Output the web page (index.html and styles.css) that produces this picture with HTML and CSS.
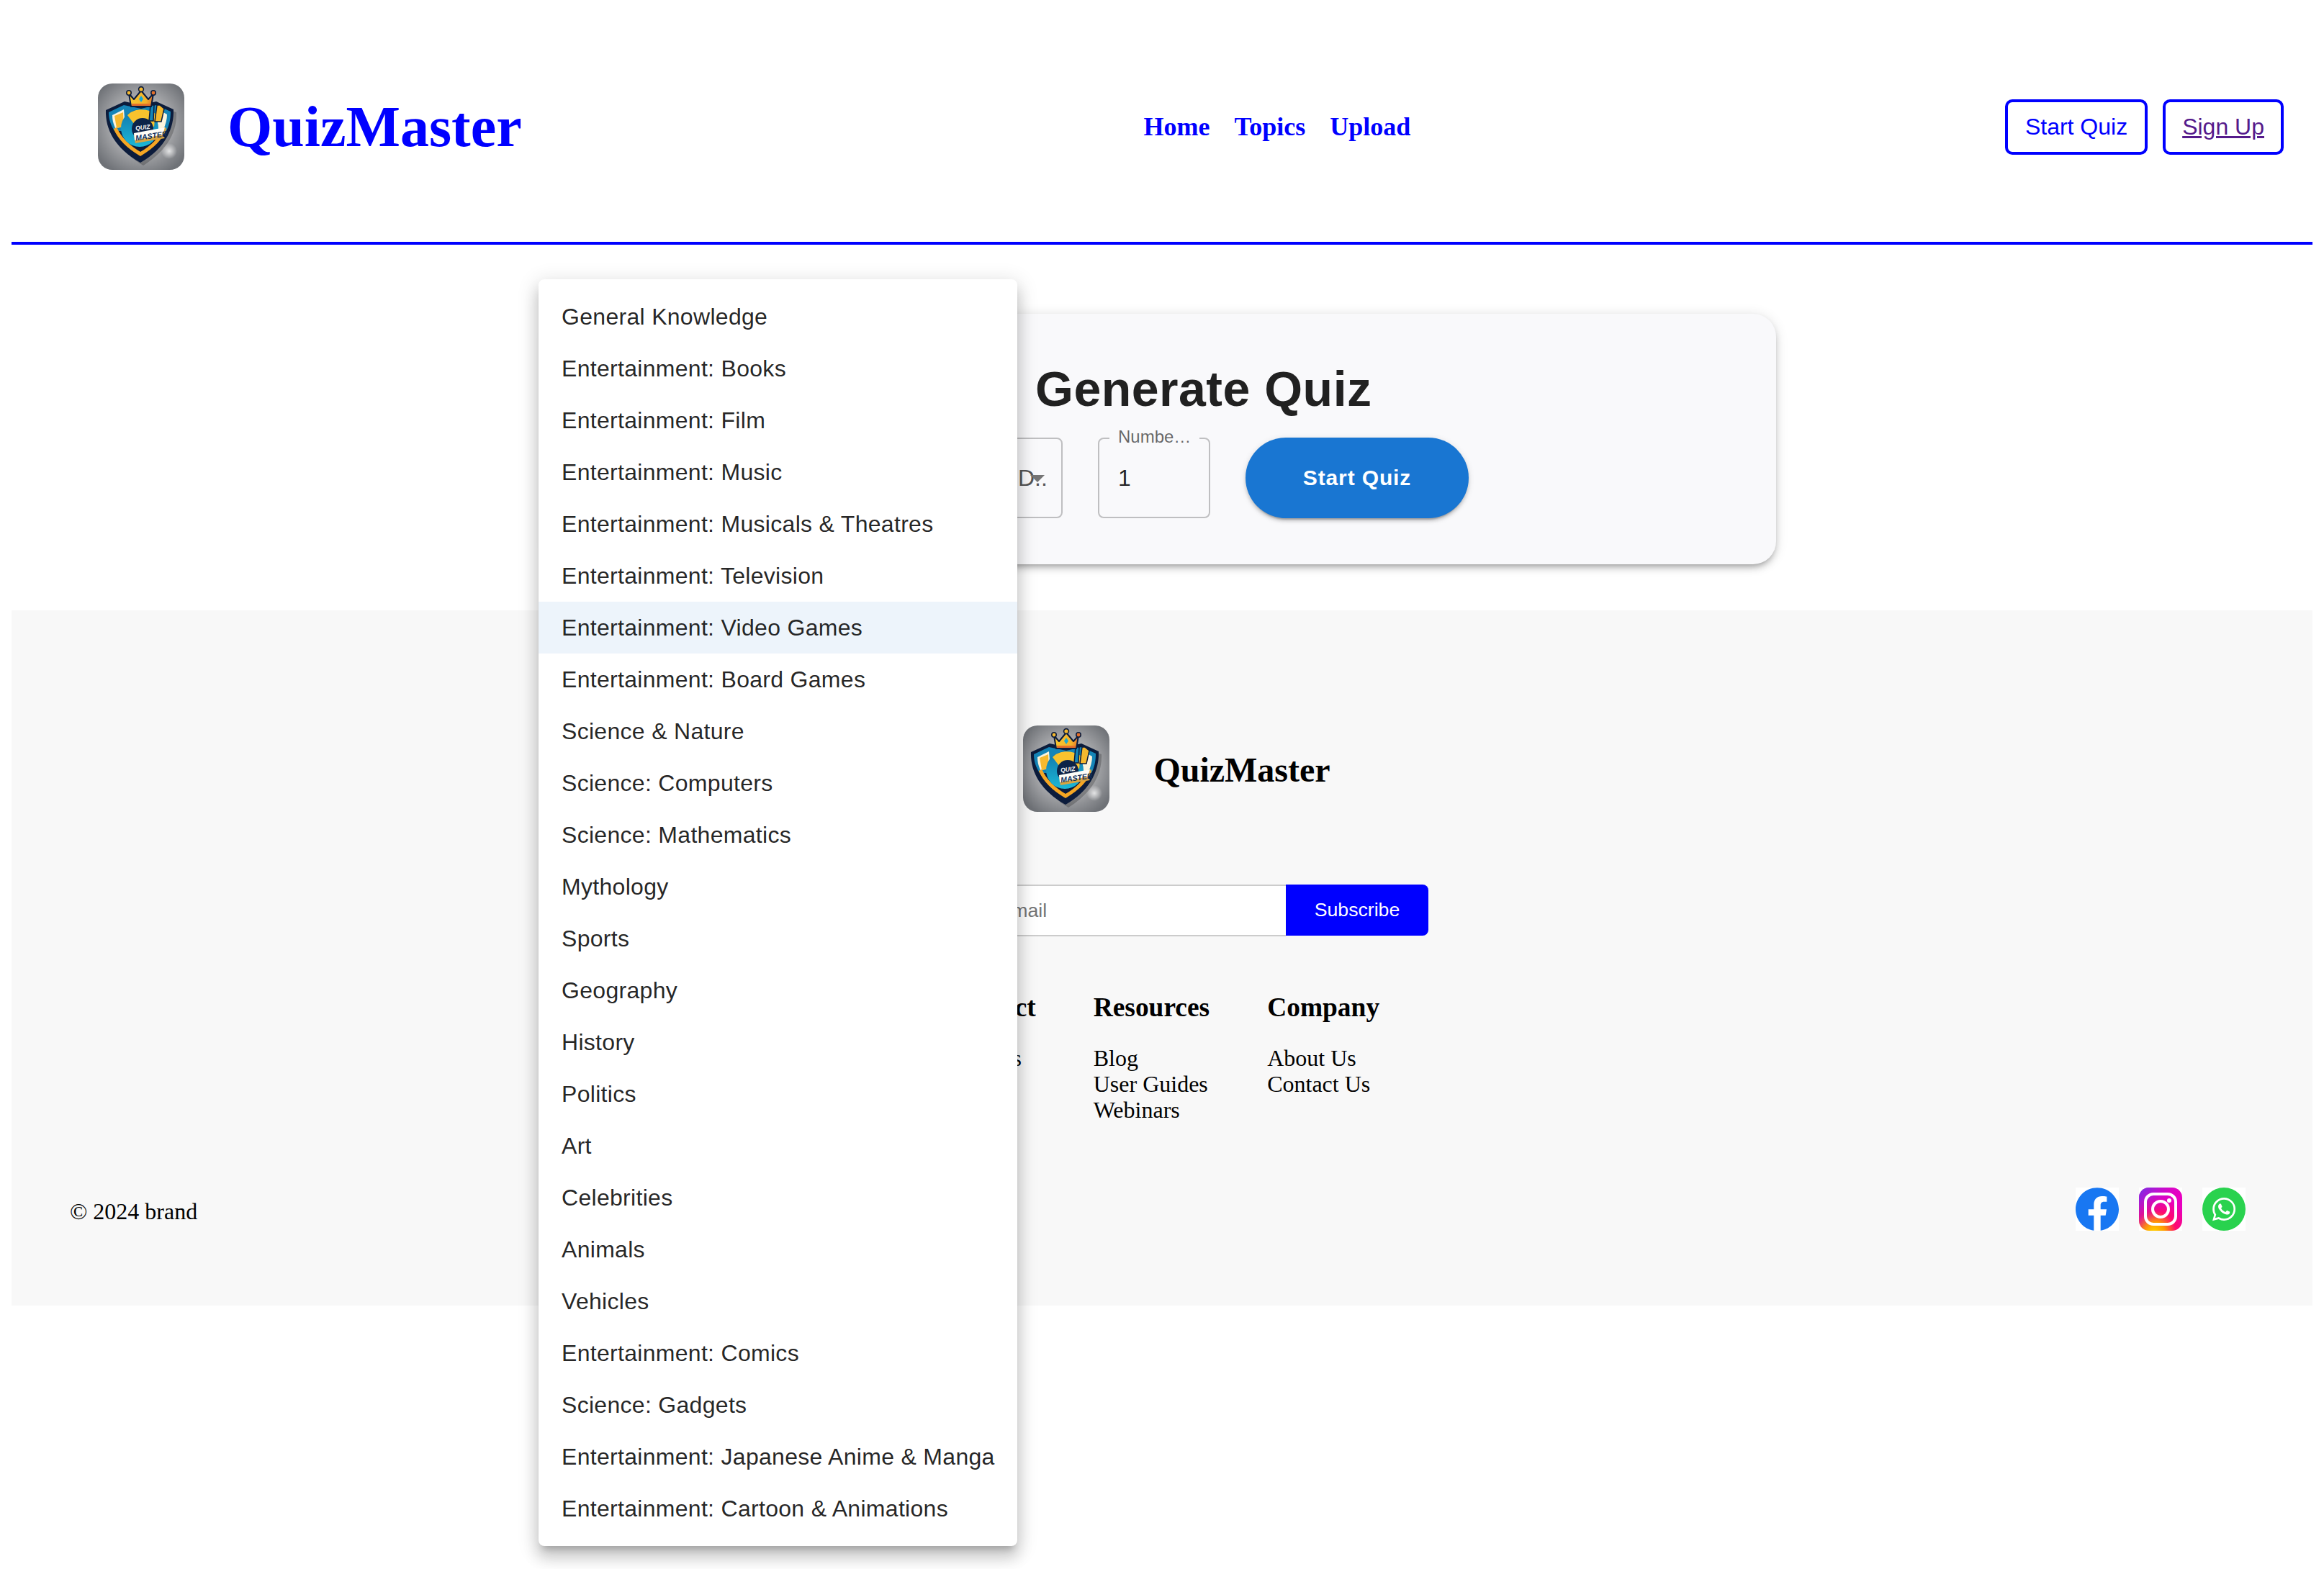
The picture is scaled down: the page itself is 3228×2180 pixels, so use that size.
FILE: index.html
```html
<!DOCTYPE html>
<html lang="en">
<head>
<meta charset="utf-8">
<title>QuizMaster</title>
<link rel="stylesheet" href="styles.css">
</head>
<body>
<svg class="defs" width="0" height="0" aria-hidden="true">
  <defs>
    <radialGradient id="lg-bg" cx="50%" cy="48%" r="62%">
      <stop offset="0" stop-color="#c8c9cb"/><stop offset=".55" stop-color="#a6a7aa"/><stop offset="1" stop-color="#6f7277"/>
    </radialGradient>
    <radialGradient id="lg-glare"><stop offset="0" stop-color="#fff" stop-opacity=".75"/><stop offset="1" stop-color="#fff" stop-opacity="0"/></radialGradient>
    <linearGradient id="lg-gold" x1="0" y1="0" x2="1" y2="0"><stop offset="0" stop-color="#f6c52f"/><stop offset=".7" stop-color="#f4b32a"/><stop offset="1" stop-color="#e5702a"/></linearGradient>
    <linearGradient id="lg-ring" x1="0" y1="0" x2="0" y2="1"><stop offset="0" stop-color="#0f75ab"/><stop offset="1" stop-color="#1cb8d6"/></linearGradient>
    <radialGradient id="ig-a" cx="35%" cy="105%" r="85%"><stop offset="0" stop-color="#ffd600"/><stop offset=".3" stop-color="#ff9a00"/><stop offset=".6" stop-color="#ff0a6c"/><stop offset="1" stop-color="#e800c0"/></radialGradient>
    <linearGradient id="ig-b" x1="0" y1="0" x2=".6" y2=".6"><stop offset="0" stop-color="#6a35e8"/><stop offset="1" stop-color="#e000c8" stop-opacity="0"/></linearGradient>
    <symbol id="logo" viewBox="0 0 120 120">
      <rect width="120" height="120" rx="20" fill="url(#lg-bg)"/>
      <circle cx="99" cy="94" r="11" fill="url(#lg-glare)"/>
      <path d="M14 40 41 28 60 33 79 28 106 37 C107 62 96 88 60 111 C26 90 12 66 14 40Z" fill="#000" opacity=".22" transform="translate(3 3)"/>
      <path d="M11 37 37 25 60 30 81 25 105 36 C106 62 94 90 59 110 C24 90 10 64 11 37Z" fill="#0c1c3c"/>
      <path d="M15 40 36 30 60 35 81 30 101 39 C101 50 99 58 95 66 L23 66 C18 58 15 50 15 40Z" fill="#1585b8"/>
      <path d="M20 44 36 36 38 60 24 62 C21 55 20 50 20 44Z" fill="#fbf4de"/>
      <path d="M23 45 35 40 36 60 26 62Z" fill="#f6b92e"/>
      <path d="M84 36 96 43 C96 50 94 57 91 64 L82 64Z" fill="#fbf4de"/>
      <path d="M24 62 C30 76 42 88 59 98 C76 88 88 76 93 62" fill="none" stroke="#f5a623" stroke-width="5"/>
      <circle cx="58" cy="62" r="26" fill="url(#lg-ring)"/>
      <path d="M41 44 C50 34 68 34 80 42 L78 60 L50 56Z" fill="#f8c22e"/>
      <path d="M82 30h4l6 5-4 18h-9Z" fill="#f6b92e" stroke="#0c1c3c" stroke-width="1.5"/>
      <path d="M73 30h5l-1 22h-6Z" fill="#1585b8" stroke="#0c1c3c" stroke-width="1.5"/>
      <circle cx="62" cy="63" r="15" fill="#0c2348"/>
      <path d="M50 71 95 61 90 72 93 76 52 83Z" fill="#d9a441"/>
      <path d="M50 69 93 61 90 71 51 79Z" fill="#fdfdf8"/>
      <path class="crown" d="M43 14 50 22 60 10 70 22 77 14 74 32 46 32Z" fill="url(#lg-gold)" stroke="#0c1c3c" stroke-width="2" stroke-linejoin="round"/>
      <circle cx="60" cy="8" r="3.4" fill="#f5b82e" stroke="#0c1c3c" stroke-width="1.6"/>
      <circle cx="43" cy="13" r="3.2" fill="#f5b82e" stroke="#0c1c3c" stroke-width="1.6"/>
      <circle cx="77" cy="13" r="3.2" fill="#e5702a" stroke="#0c1c3c" stroke-width="1.6"/>
      <path d="M60 17l3 4.5-3 4.5-3-4.5Z" fill="#17a8d8"/>
      <rect x="47" y="28" width="26" height="3" fill="#e5702a"/>
      <text class="logo-quiz" x="52" y="64" transform="rotate(-6 62 60)">QUIZ</text>
      <text class="logo-master" x="52" y="77" transform="rotate(-8 70 72)">MASTER</text>
    </symbol>
  </defs>
</svg>

<header class="site-header">
  <div class="brand">
    <svg class="brand-logo"><use href="#logo"/></svg>
    <div class="brand-name">QuizMaster</div>
  </div>
  <nav class="main-nav">
    <a class="nav-link" href="#home">Home</a>
    <a class="nav-link" href="#topics">Topics</a>
    <a class="nav-link" href="#upload">Upload</a>
  </nav>
  <div class="header-actions">
    <button class="outline-btn" type="button">Start Quiz</button>
    <div class="outline-btn signup"><span class="visited-link">Sign Up</span></div>
  </div>
</header>

<main class="main">
  <section class="quiz-card">
    <h1 class="quiz-title">Generate Quiz</h1>
    <div class="quiz-controls">
      <div class="field field-category"></div>
      <div class="field field-difficulty"><span class="field-value">D..</span><span class="field-arrow"></span></div>
      <div class="field field-number"><span class="field-label">Numbe…</span><span class="field-number-value">1</span></div>
      <button class="start-btn" type="button">Start Quiz</button>
    </div>
  </section>
</main>

<footer class="site-footer">
  <div class="footer-brand">
    <svg class="brand-logo"><use href="#logo"/></svg>
    <div class="footer-name">QuizMaster</div>
  </div>
  <form class="subscribe">
    <input class="subscribe-input" type="email" placeholder="Enter your email">
    <button class="subscribe-btn" type="button">Subscribe</button>
  </form>
  <div class="footer-columns">
    <div class="footer-col">
      <h3 class="footer-heading">Product</h3>
      <div class="footer-item">Features</div>
      <div class="footer-item">Pricing</div>
    </div>
    <div class="footer-col">
      <h3 class="footer-heading">Resources</h3>
      <div class="footer-item">Blog</div>
      <div class="footer-item">User Guides</div>
      <div class="footer-item">Webinars</div>
    </div>
    <div class="footer-col">
      <h3 class="footer-heading">Company</h3>
      <div class="footer-item">About Us</div>
      <div class="footer-item">Contact Us</div>
    </div>
  </div>
  <div class="footer-bottom">
    <div class="copyright">© 2024 brand</div>
    <div class="socials">
      <svg class="social" viewBox="0 0 24 24"><rect width="24" height="24" fill="#fff"/><path fill="#1877f2" d="M24 12.073c0-6.627-5.373-12-12-12s-12 5.373-12 12c0 5.99 4.388 10.954 10.125 11.854v-8.385H7.078v-3.47h3.047V9.43c0-3.007 1.792-4.669 4.533-4.669 1.312 0 2.686.235 2.686.235v2.953H15.83c-1.491 0-1.956.925-1.956 1.874v2.25h3.328l-.532 3.47h-2.796v8.385C19.612 23.027 24 18.062 24 12.073z"/></svg>
      <svg class="social" viewBox="0 0 60 60"><rect width="60" height="60" fill="#fff"/><rect width="60" height="60" rx="14" fill="url(#ig-a)"/><rect width="60" height="60" rx="14" fill="url(#ig-b)"/><rect x="9" y="9" width="42" height="42" rx="11" fill="none" stroke="#fff" stroke-width="4"/><circle cx="30" cy="30" r="11" fill="none" stroke="#fff" stroke-width="4"/><circle cx="42" cy="18" r="3" fill="#fff"/></svg>
      <svg class="social" viewBox="0 0 60 60"><rect width="60" height="60" fill="#fff"/><circle cx="30" cy="30" r="30" fill="#29d24e"/><path transform="translate(14 14) scale(1.34)" fill="#fff" d="M17.472 14.382c-.297-.149-1.758-.867-2.03-.967-.273-.099-.471-.148-.67.15-.197.297-.767.966-.94 1.164-.173.199-.347.223-.644.075-.297-.15-1.255-.463-2.39-1.475-.883-.788-1.48-1.761-1.653-2.059-.173-.297-.018-.458.13-.606.134-.133.298-.347.446-.52.149-.174.198-.298.298-.497.099-.198.05-.371-.025-.52-.075-.149-.669-1.612-.916-2.207-.242-.579-.487-.5-.669-.51-.173-.008-.371-.01-.57-.01-.198 0-.52.074-.792.372-.272.297-1.04 1.016-1.04 2.479 0 1.462 1.065 2.875 1.213 3.074.149.198 2.096 3.2 5.077 4.487.709.306 1.262.489 1.694.625.712.227 1.36.195 1.871.118.571-.085 1.758-.719 2.006-1.413.248-.694.248-1.289.173-1.413-.074-.124-.272-.198-.57-.347m-5.421 7.403h-.004a9.87 9.87 0 01-5.031-1.378l-.361-.214-3.741.982.998-3.648-.235-.374a9.86 9.86 0 01-1.51-5.26c.001-5.45 4.436-9.884 9.888-9.884 2.64 0 5.122 1.03 6.988 2.898a9.825 9.825 0 012.893 6.994c-.003 5.45-4.437 9.884-9.885 9.884m8.413-18.297A11.815 11.815 0 0012.05 0C5.495 0 .16 5.335.157 11.892c0 2.096.547 4.142 1.588 5.945L.057 24l6.305-1.654a11.882 11.882 0 005.683 1.448h.005c6.554 0 11.89-5.335 11.893-11.893a11.821 11.821 0 00-3.48-8.413z"/></svg>
    </div>
  </div>
</footer>

<ul class="menu">
  <li class="menu-item">General Knowledge</li>
  <li class="menu-item">Entertainment: Books</li>
  <li class="menu-item">Entertainment: Film</li>
  <li class="menu-item">Entertainment: Music</li>
  <li class="menu-item">Entertainment: Musicals &amp; Theatres</li>
  <li class="menu-item">Entertainment: Television</li>
  <li class="menu-item is-active">Entertainment: Video Games</li>
  <li class="menu-item">Entertainment: Board Games</li>
  <li class="menu-item">Science &amp; Nature</li>
  <li class="menu-item">Science: Computers</li>
  <li class="menu-item">Science: Mathematics</li>
  <li class="menu-item">Mythology</li>
  <li class="menu-item">Sports</li>
  <li class="menu-item">Geography</li>
  <li class="menu-item">History</li>
  <li class="menu-item">Politics</li>
  <li class="menu-item">Art</li>
  <li class="menu-item">Celebrities</li>
  <li class="menu-item">Animals</li>
  <li class="menu-item">Vehicles</li>
  <li class="menu-item">Entertainment: Comics</li>
  <li class="menu-item">Science: Gadgets</li>
  <li class="menu-item">Entertainment: Japanese Anime &amp; Manga</li>
  <li class="menu-item">Entertainment: Cartoon &amp; Animations</li>
</ul>
</body>
</html>
```

FILE: styles.css
```css
* { box-sizing: border-box; }

html, body { height: 100%; }

body {
  margin: 0;
  padding: 16px 16px 0;
  background: #fff;
  color: #000;
  font-family: "Liberation Serif", serif;
  font-size: 32px;
  overflow: hidden;
  position: relative;
}

.defs { position: absolute; }

/* Header */
.site-header {
  height: 324px;
  padding: 0 40px 0 120px;
  border-bottom: 4px solid #00f;
  display: flex;
  align-items: center;
  justify-content: space-between;
}

.brand { display: flex; align-items: center; gap: 60px; }

.brand-logo { width: 120px; height: 120px; display: block; flex: none; }

.brand-name {
  font-size: 80px;
  font-weight: 700;
  color: #00f;
  line-height: 92px;
}

.main-nav { display: flex; gap: 34px; margin-left: 38px; }

.nav-link {
  font-size: 36px;
  font-weight: 700;
  color: #00f;
  text-decoration: none;
}

.header-actions { display: flex; gap: 21px; }

.outline-btn {
  height: 77px;
  padding: 0 24px;
  background: #fff;
  border: 4px solid #00f;
  border-radius: 10px;
  color: #00f;
  font-family: "Liberation Sans", sans-serif;
  font-size: 32px;
  display: flex;
  align-items: center;
}

.signup { padding: 0 23px; }

.visited-link { color: #551a8b; text-decoration: underline; }

/* Quiz card */
.main { padding-top: 96px; }

.quiz-card {
  margin-left: 745px;
  width: 1706px;
  height: 348px;
  padding-top: 62px;
  background: #f9f9fb;
  border-radius: 32px;
  box-shadow: 0 6px 6px -4px rgba(0,0,0,.2), 0 6px 10px 0 rgba(0,0,0,.14), 0 2px 18px 0 rgba(0,0,0,.12);
  font-family: "Liberation Sans", sans-serif;
}

.quiz-title {
  margin: 0 0 26px 677px;
  font-size: 68px;
  font-weight: 700;
  line-height: 84px;
  letter-spacing: .5px;
  color: #212121;
}

.quiz-controls { display: flex; justify-content: center; gap: 49px; }

.field {
  position: relative;
  height: 112px;
  border: 2px solid rgba(0,0,0,.23);
  border-radius: 8px;
  display: flex;
  align-items: center;
}

.field-category { width: 146px; }

.field-difficulty { width: 93px; padding-left: 29px; }

.field-value { color: #555; font-size: 32px; }

.field-arrow {
  position: absolute;
  left: 46px;
  top: 50px;
  width: 0;
  height: 0;
  border-left: 10px solid transparent;
  border-right: 10px solid transparent;
  border-top: 10px solid #757575;
}

.field-number { width: 156px; padding-left: 26px; font-size: 32px; color: rgba(0,0,0,.87); }

.field-label {
  position: absolute;
  left: 14px;
  top: -17px;
  padding: 0 12px;
  background: #f9f9fb;
  font-size: 24px;
  line-height: 28px;
  color: rgba(0,0,0,.6);
  white-space: nowrap;
}

.start-btn {
  width: 310px;
  height: 112px;
  border: 0;
  border-radius: 56px;
  background: #1976d2;
  color: #fff;
  font-family: inherit;
  font-size: 30px;
  font-weight: 700;
  letter-spacing: .86px;
  box-shadow: 0 6px 2px -4px rgba(0,0,0,.2), 0 4px 4px 0 rgba(0,0,0,.14), 0 2px 10px 0 rgba(0,0,0,.12);
}

/* Footer */
.site-footer {
  margin-top: 64px;
  height: 966px;
  padding-top: 160px;
  background: #f8f8f8;
  display: flex;
  flex-direction: column;
  align-items: center;
}

.footer-brand {
  display: flex;
  align-items: center;
  gap: 61px;
  padding-left: 41px;
}

.footer-name { font-size: 48px; font-weight: 700; line-height: 56px; margin-top: 4px; }

.subscribe { display: flex; margin-top: 101px; width: 740px; }

.subscribe-input {
  flex: 1;
  height: 72px;
  padding: 0 14px;
  background: #fff;
  border: 2px solid #ccc;
  border-right: 0;
  border-radius: 8px 0 0 8px;
  font-family: "Liberation Sans", sans-serif;
  font-size: 26.67px;
  outline: none;
}

.subscribe-input::placeholder { color: #757575; }

.subscribe-btn {
  width: 198px;
  height: 71px;
  border: 0;
  border-radius: 0 8px 8px 0;
  background: #00f;
  color: #fff;
  font-family: "Liberation Sans", sans-serif;
  font-size: 26.67px;
}

.footer-columns { display: flex; gap: 80px; margin-top: 77px; width: 607px; }

.footer-heading {
  margin: 0 0 31px;
  font-size: 37.44px;
  font-weight: 700;
  line-height: 43px;
}

.footer-item { font-size: 32px; line-height: 36px; }

.footer-bottom {
  align-self: stretch;
  margin-top: 90px;
  padding: 0 93px 0 81px;
  display: flex;
  align-items: center;
  justify-content: space-between;
}

.copyright { padding-top: 6px; }

.socials { display: flex; gap: 28px; }

.social { width: 60px; height: 60px; display: block; }

/* Dropdown */
.menu {
  position: absolute;
  left: 748px;
  top: 388px;
  width: 665px;
  margin: 0;
  padding: 16px 0;
  list-style: none;
  background: #fff;
  border-radius: 8px;
  box-shadow: 0 10px 10px -6px rgba(0,0,0,.2), 0 16px 20px 2px rgba(0,0,0,.14), 0 6px 28px 4px rgba(0,0,0,.12);
  font-family: "Liberation Sans", sans-serif;
}

.menu-item {
  height: 72px;
  padding: 0 32px;
  display: flex;
  align-items: center;
  font-size: 32px;
  letter-spacing: .3px;
  color: rgba(0,0,0,.87);
  white-space: nowrap;
}

.menu-item.is-active { background: rgba(25,118,210,.08); }

/* Logo lettering */
.logo-quiz {
  font-family: "Liberation Sans", sans-serif;
  font-size: 8.5px;
  font-weight: 700;
  font-style: italic;
  fill: #fff;
}

.logo-master {
  font-family: "Liberation Sans", sans-serif;
  font-size: 10.5px;
  font-weight: 700;
  font-style: italic;
  fill: #12305c;
}
```
